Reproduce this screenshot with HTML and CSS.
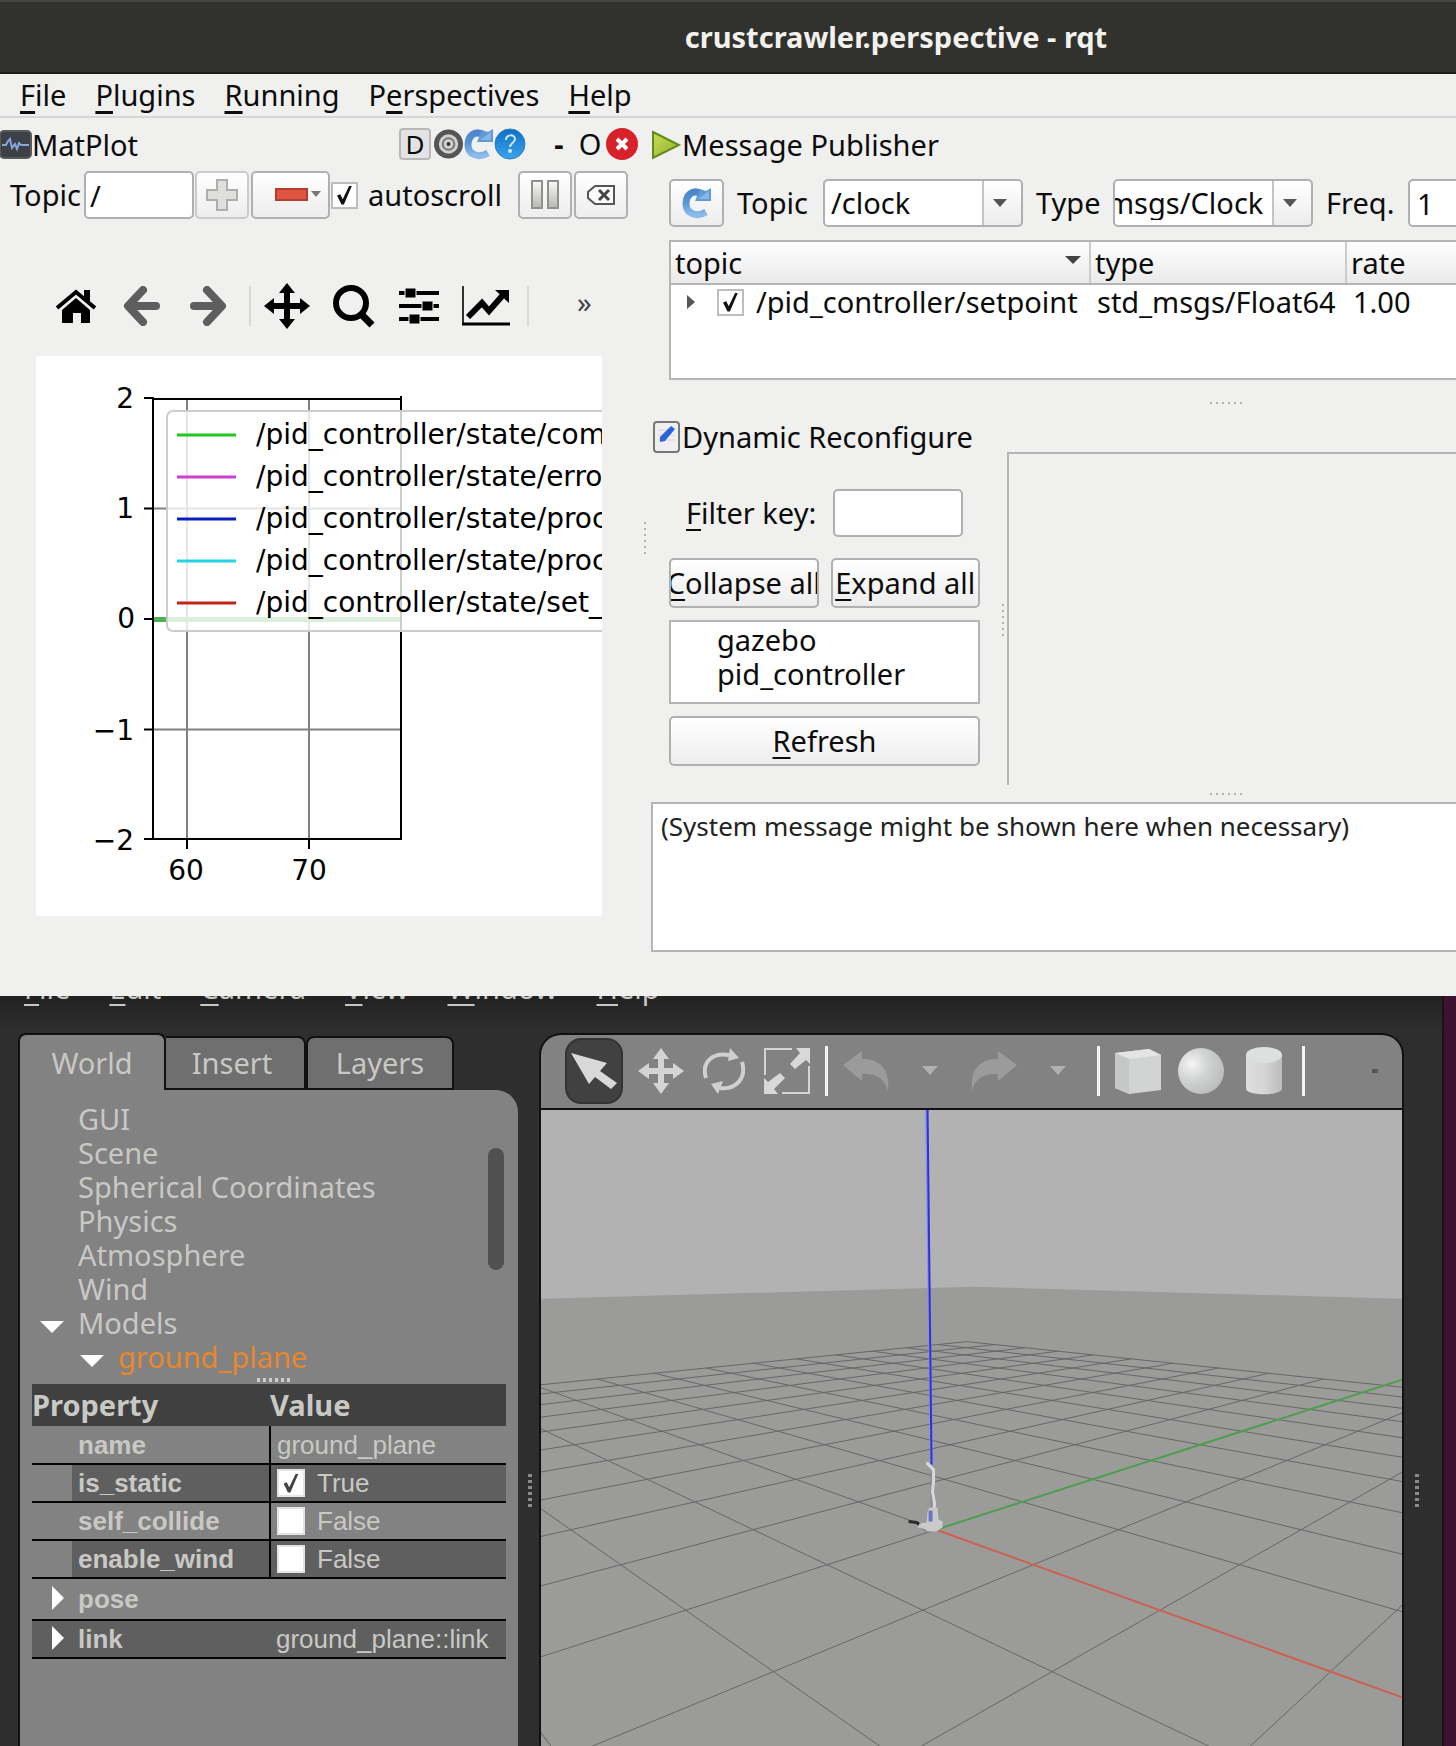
FILE: index.html
```html
<!DOCTYPE html>
<html lang="en">
<head>
<meta charset="utf-8">
<title>crustcrawler.perspective - rqt</title>
<link rel="stylesheet" href="styles.css">
</head>
<body>
<svg class="defs" width="0" height="0" aria-hidden="true">
  <defs>
    <linearGradient id="blue" x1="0" y1="0" x2="0" y2="1"><stop offset="0" stop-color="#4a86c8"/><stop offset="0.5" stop-color="#5b97d6"/><stop offset="1" stop-color="#8dbcea"/></linearGradient>
    <linearGradient id="help" x1="0" y1="0" x2="0" y2="1"><stop offset="0" stop-color="#0f6fc4"/><stop offset="1" stop-color="#3aa5ec"/></linearGradient>
    <linearGradient id="green" x1="0" y1="0" x2="1" y2="1"><stop offset="0" stop-color="#c8dc5a"/><stop offset="1" stop-color="#8fb02a"/></linearGradient>
    <linearGradient id="bar" x1="0" y1="0" x2="0" y2="1"><stop offset="0" stop-color="#fafafa"/><stop offset="1" stop-color="#b4b8ae"/></linearGradient>
    <radialGradient id="ball" cx="0.3" cy="0.35" r="0.7"><stop offset="0" stop-color="#f4f4f4"/><stop offset="0.5" stop-color="#d2d3d3"/><stop offset="1" stop-color="#bdbfbf"/></radialGradient>
    <linearGradient id="tube"><stop offset="0" stop-color="#dedede"/><stop offset="0.5" stop-color="#d4d5d5"/><stop offset="1" stop-color="#bcbcbc"/></linearGradient>
    <symbol id="reload" viewBox="0 0 30 32"><path d="M20 7C10 1 4 9 4 17c0 9 10 14 20 8" fill="none" stroke="url(#blue)" stroke-width="7"/><path d="M13 14h16V1l-5 3-6-2z" fill="#5f9bd8"/><path d="M16 12L27 4v8z" fill="#86b6e6"/></symbol>
  </defs>
</svg>

<main class="rqt">
  <header class="titlebar"><h1>crustcrawler.perspective - rqt</h1></header>
  <nav class="menubar">
    <a href="#"><u>F</u>ile</a><a href="#"><u>P</u>lugins</a><a href="#"><u>R</u>unning</a><a href="#">P<u>e</u>rspectives</a><a href="#"><u>H</u>elp</a>
  </nav>

  <div class="docks">
    <section class="matplot">
      <div class="dock-title">
        <svg width="32" height="30" viewBox="0 0 32 30"><rect x="0" y="1" width="31" height="27" rx="4" fill="#3d4147" stroke="#5a5a5a" stroke-width="2"/><path d="M2 15h4l2-4 2-2 2 9 3-4 2 5 2-6 2 2h8" fill="none" stroke="#86a6dc" stroke-width="2"/></svg>
        <h2>MatPlot</h2>
        <div class="dock-buttons">
          <button class="dbtn" aria-label="Toggle">D</button>
          <button class="plain" aria-label="Settings"><svg width="31" height="32" viewBox="0 0 32 32"><circle cx="16" cy="16" r="15" fill="#555"/><circle cx="16" cy="16" r="10" fill="#d0d0d0"/><circle cx="16" cy="16" r="6" fill="none" stroke="#777" stroke-width="2"/><circle cx="16" cy="16" r="2" fill="#333"/></svg></button>
          <button class="plain" aria-label="Reload"><svg width="30" height="32"><use href="#reload"/></svg></button>
          <button class="plain" aria-label="Help"><svg width="32" height="32" viewBox="0 0 32 32"><circle cx="16" cy="16" r="15" fill="url(#help)" stroke="#2c7cc0"/><path d="M12 12c0-6 9-6 9-1 0 4-5 4-5 8" fill="none" stroke="#cfeaff" stroke-width="2"/><circle cx="16" cy="23" r="2" fill="#cfeaff"/></svg></button>
          <button class="plain letter dash" aria-label="Minimize">-</button>
          <button class="plain letter" aria-label="Float">O</button>
          <button class="plain" aria-label="Close"><svg width="32" height="32" viewBox="0 0 32 32"><circle cx="16" cy="16" r="16" fill="#d8222a"/><path d="M11 11l10 10M21 11L11 21" stroke="#fff" stroke-width="4"/></svg></button>
        </div>
      </div>

      <div class="plot-controls">
        <label for="plot-topic">Topic</label>
        <input id="plot-topic" type="text" value="/">
        <button class="btn add" aria-label="Add topic"><svg width="32" height="32" viewBox="0 0 32 32"><path d="M11 1h10v10h10v10H21v10H11V21H1V11h10z" fill="#dfe0dd" stroke="#adafaa" stroke-width="2"/></svg></button>
        <button class="btn remove" aria-label="Remove topic"><svg width="48" height="16" viewBox="0 0 48 16"><rect x="1" y="2" width="31" height="11" fill="#e0553f" stroke="#b23f2e" stroke-width="2"/><path d="M36 4h10l-5 6z" fill="#777"/></svg></button>
        <label class="auto"><input type="checkbox" class="tick" checked>autoscroll</label>
        <button class="btn pause" aria-label="Pause"><svg width="30" height="30" viewBox="0 0 30 30"><path d="M2 1h10v27H2zM18 1h10v27H18z" fill="url(#bar)" stroke="#8f928b" stroke-width="2"/></svg></button>
        <button class="btn clear" aria-label="Clear"><svg width="30" height="22" viewBox="0 0 30 22"><path d="M9 2h19v18H9L2 14V8z" fill="#fafafa" stroke="#555" stroke-width="2"/><path d="M13 6l10 10M23 6L13 16" stroke="#444" stroke-width="3"/></svg></button>
      </div>

      <div class="nav-tools">
        <div class="nav-group history">
          <button class="plain" aria-label="Home"><svg width="40" height="36" viewBox="0 0 40 36"><path d="M20 10L34 22v13H25V25h-8v10H6V22z"/><path d="M1 20L20 4l19 16" fill="none" stroke="#000" stroke-width="4"/><path d="M28 2h6v13l-6-5z"/></svg></button>
          <button class="plain" aria-label="Back"><svg width="40" height="40" viewBox="0 0 40 40"><path d="M21 4L6 20l15 16M8 20h26" fill="none" stroke="#5e5e5e" stroke-width="8" stroke-linecap="round" stroke-linejoin="round"/></svg></button>
          <button class="plain" aria-label="Forward"><svg width="40" height="40" viewBox="0 0 40 40"><path d="M19 4l15 16-15 16M32 20H6" fill="none" stroke="#5e5e5e" stroke-width="8" stroke-linecap="round" stroke-linejoin="round"/></svg></button>
        </div>
        <i class="bar"></i>
        <div class="nav-group modes">
          <button class="plain" aria-label="Pan"><svg width="46" height="46" viewBox="0 0 46 46"><path d="M23 0l8 10h-5v10h10v-5l10 8-10 8v-5H26v10h5l-8 10-8-10h5V26H10v5L0 23l10-8v5h10V10h-5z"/></svg></button>
          <button class="plain" aria-label="Zoom"><svg width="44" height="44" viewBox="0 0 44 44"><circle cx="19" cy="19" r="15" fill="none" stroke="#000" stroke-width="6"/><path d="M29 30l11 11" stroke="#000" stroke-width="7"/></svg></button>
          <button class="plain" aria-label="Subplots"><svg width="42" height="38" viewBox="0 0 42 38"><path d="M1 6h40M1 19h40M1 32h40" stroke="#000" stroke-width="4"/><path d="M7 1h11v10H7zM24 14h11v10H24zM11 27h11v10H11z" stroke="#f0f0ef"/></svg></button>
          <button class="plain" aria-label="Edit axes"><svg width="48" height="40" viewBox="0 0 48 40"><path d="M1 0v37" stroke="#333" stroke-width="2"/><path d="M0 38h48" stroke="#000" stroke-width="3"/><path d="M6 31l14-14 7 8L41 9" fill="none" stroke="#000" stroke-width="6"/><path d="M33 4h14v13z"/></svg></button>
        </div>
        <i class="bar"></i>
        <button class="plain more" aria-label="More">»</button>
      </div>

      <svg class="figure" viewBox="0 0 566 560" role="img" aria-label="Plot">
        <rect width="566" height="560" fill="#fff"/>
        <path d="M151 43v440M273 43v440M117 152.500h248M117 373.500h248" stroke="#808080" stroke-width="2"/>
        <path d="M117 263.500h248" stroke="#4caf50" stroke-width="5"/>
        <path d="M117 41v443M365 40v444M108 42h9M117 43h248M108 483h257M108 152.500h9M108 263h9M108 373.500h9M151 483v10M273 483v10" stroke="#000" stroke-width="2" fill="none"/>
        <rect x="131" y="55" width="480" height="220" rx="6" fill="#fff" fill-opacity="0.800" stroke="#ccc" stroke-width="2"/>
        <g stroke-width="3"><path d="M141 79h59" stroke="#1fc81f"/><path d="M141 121h59" stroke="#cf3fcf"/><path d="M141 163h59" stroke="#0a1fc0"/><path d="M141 205h59" stroke="#25d5e5"/><path d="M141 247h59" stroke="#c22418"/></g>
        <g class="fig-text">
          <text x="220" y="88">/pid_controller/state/com</text>
          <text x="220" y="130">/pid_controller/state/erro</text>
          <text x="220" y="172">/pid_controller/state/proc</text>
          <text x="220" y="214">/pid_controller/state/proc</text>
          <text x="220" y="256">/pid_controller/state/set_</text>
          <g text-anchor="end"><text x="98" y="52">2</text><text x="98" y="162">1</text><text x="99" y="272">0</text><text x="98" y="384">−1</text><text x="98" y="494">−2</text></g>
          <g text-anchor="middle"><text x="150" y="524">60</text><text x="273" y="524">70</text></g>
        </g>
      </svg>
    </section>

    <div class="split-v"><i class="dots-v"></i></div>

    <section class="right">
      <div class="dock-title">
        <svg width="31" height="30" viewBox="0 0 31 30"><path d="M2 2l26 13L2 28z" fill="url(#green)" stroke="#5f8a1c" stroke-width="2"/></svg>
        <h2>Message Publisher</h2>
      </div>
      <div class="pub-controls">
        <button class="btn reload" aria-label="Reload"><svg width="30" height="32"><use href="#reload"/></svg></button>
        <label for="pub-topic">Topic</label>
        <span class="combo"><select id="pub-topic"><option>/clock</option></select></span>
        <label for="pub-type">Type</label>
        <span class="combo cut"><select id="pub-type"><option>msgs/Clock</option></select></span>
        <label for="pub-freq">Freq.</label>
        <input id="pub-freq" type="text" value="1">
      </div>
      <div class="pub-table">
        <table>
          <thead><tr><th class="c-topic">topic<i class="sort"></i></th><th class="c-type">type</th><th class="c-rate">rate</th></tr></thead>
          <tbody><tr><td><label class="pub-row"><i class="fold"></i><input type="checkbox" class="tick" checked>/pid_controller/setpoint</label></td><td>std_msgs/Float64</td><td>1.00</td></tr></tbody>
        </table>
      </div>
      <div class="split-h"><i class="dots-h"></i></div>

      <div class="reconf">
        <div class="reconf-left">
          <div class="dock-title">
            <svg width="31" height="32" viewBox="0 0 31 32"><rect x="3" y="1" width="25" height="30" rx="3" fill="#efefef" stroke="#777" stroke-width="2"/><path d="M7 9h14M7 14h17M7 19h17" stroke="#d5d5d5"/><path d="M9 16L20 5l4 3-10 12-5 1z" fill="#2a62d8"/></svg>
            <h2>Dynamic Reconfigure</h2>
          </div>
          <div class="filter"><label for="filter"><u>F</u>ilter key:</label><input id="filter" type="text"></div>
          <div class="pair"><button class="btn"><u>C</u>ollapse all</button><button class="btn"><u>E</u>xpand all</button></div>
          <ul class="nodes"><li>gazebo</li><li>pid_controller</li></ul>
          <button class="btn wide"><u>R</u>efresh</button>
        </div>
        <div class="reconf-split"><i class="dots-v"></i></div>
        <div class="reconf-view"></div>
      </div>
      <div class="split-h low"><i class="dots-h"></i></div>
      <div class="sysmsg">(System message might be shown here when necessary)</div>
    </section>
  </div>
</main>

<div class="desktop">
  <section class="gazebo">
    <nav class="gz-menu"><a href="#"><u>F</u>ile</a><a href="#"><u>E</u>dit</a><a href="#"><u>C</u>amera</a><a href="#"><u>V</u>iew</a><a href="#"><u>W</u>indow</a><a href="#"><u>H</u>elp</a></nav>
    <div class="gz-main">
      <aside class="side">
        <div class="tabs"><button class="tab on">World</button><button class="tab">Insert</button><button class="tab last">Layers</button></div>
        <div class="panel">
          <div class="tree-box">
            <ul class="tree">
              <li>GUI</li><li>Scene</li><li>Spherical Coordinates</li><li>Physics</li><li>Atmosphere</li><li>Wind</li>
              <li class="open">Models</li><li class="open sub">ground_plane</li>
            </ul>
            <i class="scroll"></i>
          </div>
          <div class="grip"><i class="dots-h"></i></div>
          <table class="props">
            <thead><tr><th class="p-name">Property</th><th>Value</th></tr></thead>
            <tbody>
              <tr><th>name</th><td>ground_plane</td></tr>
              <tr class="dark"><th>is_static</th><td><label><input type="checkbox" class="tick" checked>True</label></td></tr>
              <tr><th>self_collide</th><td><label><input type="checkbox" class="tick">False</label></td></tr>
              <tr class="dark"><th>enable_wind</th><td><label><input type="checkbox" class="tick">False</label></td></tr>
              <tr class="group tall"><th>pose</th><td></td></tr>
              <tr class="group dark"><th>link</th><td>ground_plane::link</td></tr>
            </tbody>
          </table>
        </div>
      </aside>
      <div class="gutter"><i class="dots-v"></i></div>
      <div class="view">
        <div class="tools">
          <button class="tool on" aria-label="Select"><svg width="46" height="38" viewBox="0 0 46 38"><path d="M0 1l36 10-7 8 17 12-6 6-16-12-6 7z" fill="#d8d8d8"/></svg></button>
          <button class="tool" aria-label="Translate"><svg width="46" height="46" viewBox="0 0 46 46"><path d="M23 0l8 11h-5v9h9v-5l11 8-11 8v-5h-9v9h5l-8 11-8-11h5v-9h-9v5L0 23l11-8v5h9v-9h-5z" fill="#d4d4d4"/></svg></button>
          <button class="tool" aria-label="Rotate"><svg width="42" height="46" viewBox="0 0 42 46"><path d="M3 30C-2 14 10 4 26 7M39 14c5 17-7 28-22 26" fill="none" stroke="#d0d0d0" stroke-width="4"/><path d="M27 0l9 10-11 3zM15 46L8 36l12-3z" fill="#d0d0d0"/></svg></button>
          <button class="tool" aria-label="Scale"><svg width="46" height="46" viewBox="0 0 46 46"><path d="M28 1H1v26M18 45h27V18" fill="none" stroke="#d4d4d4" stroke-width="2"/><path d="M46 0v16l-4-4-11 9-5-5 10-11-4-5zM0 46V30l4 4 12-9 5 5-11 11 4 5z" fill="#d8d8d8"/></svg></button>
          <i class="mark"></i>
          <button class="tool" aria-label="Undo"><svg width="46" height="40" viewBox="0 0 46 40"><path d="M19 0v8c20 0 28 12 26 32-4-14-12-17-26-17v7L0 14z" fill="#9b9b9b"/></svg></button>
          <button class="tool drop" aria-label="Undo history"></button>
          <button class="tool" aria-label="Redo"><svg width="46" height="40" viewBox="0 0 46 40"><path d="M27 0v8C7 8-1 20 1 40c4-14 12-17 26-17v7l19-16z" fill="#9b9b9b"/></svg></button>
          <button class="tool drop" aria-label="Redo history"></button>
          <i class="mark"></i>
          <button class="tool" aria-label="Box"><svg width="46" height="46" viewBox="0 0 46 46"><path d="M0 5L34 1l12 6v35L14 46 0 40z" fill="#d2d4d4"/><path d="M0 5L34 1l12 6-32 4z" fill="#e4e4e4"/><path d="M0 5l14 6v35L0 40z" fill="#c6c7c7"/></svg></button>
          <button class="tool" aria-label="Sphere"><svg width="46" height="46" viewBox="0 0 46 46"><circle cx="23" cy="23" r="23" fill="url(#ball)"/></svg></button>
          <button class="tool" aria-label="Cylinder"><svg width="38" height="48" viewBox="0 0 38 48"><path d="M1 8v34c2 7 34 7 36 0V8z" fill="url(#tube)"/><ellipse cx="19" cy="8" rx="18" ry="8" fill="#dedfdf"/></svg></button>
          <i class="mark"></i>
          <i class="ext"></i>
        </div>
        <svg class="scene" viewBox="0 0 862 637" preserveAspectRatio="xMidYMin slice" role="img" aria-label="3D view">
          <rect width="862" height="637" fill="#b2b2b2"/>
          <path d="M0 189L434 177 862 189V637H0z" fill="#9b9b9a"/>
          <g id="grid" stroke="#666" stroke-width="1"></g>
          <path id="axis-y" stroke="#4da04d" stroke-width="2"/>
          <path id="axis-x" stroke="#d0604f" stroke-width="2"/>
          <path d="M386 0L391 355" stroke="#8a8fea" stroke-width="3"/><path d="M387 0L391 355" stroke="#2a34dc" stroke-width="2"/>
          <path d="M368 412l8 1 10 7" stroke="#2b2b2b" stroke-width="3" fill="none"/>
          <path d="M391 362v48" stroke="#8c8c94" stroke-width="2"/>
          <path d="M386 353l7 7v12l-1 10 2 12-1 12" stroke="#d8d8dc" stroke-width="3" fill="none"/>
          <path d="M387 402l2-4h8l1 12 4 2v6l-6 4h-8l-6-3-5-1 2-4 7-1z" fill="#cacaca"/>
          <path d="M390 401v11" stroke="#6a76c8" stroke-width="4"/>
        </svg>
      </div>
      <div class="gutter end"><i class="dots-v"></i></div>
    </div>
  </section>
</div>
<script src="scene.js"></script>
</body>
</html>
```
FILE: styles.css
```css
* { box-sizing: border-box; }
html, body { height: 100%; }
body { margin: 0; display: flex; flex-direction: column; overflow: hidden; background: #2e2e2e; font: 29px/34px "Noto Sans", "Open Sans", sans-serif; color: #0c0c0c; }
h1, h2, ul { margin: 0; padding: 0; font: inherit; }
li { list-style: none; }
a { color: inherit; text-decoration: none; }
i { font-style: normal; display: block; flex: none; }
button, input, select { font: inherit; color: inherit; margin: 0; padding: 0; border-radius: 0; outline: 0; }
svg { display: block; flex: none; }
u { text-decoration: underline 2px; text-underline-offset: 5px; text-decoration-skip-ink: none; }
.defs { position: absolute; }

.rqt { flex: none; background: #f0f0ef; overflow: hidden; }
.titlebar { height: 74px; background: #31312d; border-top: 2px solid #444; border-bottom: 2px solid #1c1c1a; display: flex; align-items: center; justify-content: center; padding-left: 336px; }
.titlebar h1 { font-weight: 700; color: #f2f1ee; font-size: 29px; white-space: nowrap; }
.menubar { height: 44px; display: flex; gap: 29px; padding: 4px 20px; border-bottom: 2px solid #d6d6d6; }
.menubar u { text-decoration-thickness: 3px; }

.docks { display: flex; height: 878px; }
.matplot { width: 638px; flex: none; display: flex; flex-direction: column; }
.dock-title { display: flex; align-items: center; height: 34px; white-space: nowrap; }
.matplot .dock-title, .right > .dock-title { margin-top: 10px; }
.dock-buttons { margin-left: auto; display: flex; align-items: center; margin-top: -2px; }
.plain { background: none; border: 0; }
.dbtn { width: 32px; height: 32px; line-height: 28px; margin-right: 2px; background: #e3e3e6; border: 2px solid #b9b9b9; border-radius: 4px; font-size: 26px; }
.letter { width: 32px; }
.dash { margin-left: 18px; width: 30px; font-weight: 700; }

.plot-controls { display: flex; align-items: center; height: 48px; margin-top: 9px; padding-left: 10px; }
.plot-controls > label:first-child { width: 74px; }
input[type="text"] { height: 48px; background: #fff; border: 2px solid #b0b0b0; border-radius: 5px; }
#plot-topic { width: 110px; padding-left: 4px; margin-right: 1px; }
.btn { height: 48px; flex: none; border: 2px solid #b0b0b0; border-radius: 5px; background: linear-gradient(#fff, #ededed); display: flex; align-items: center; justify-content: center; white-space: nowrap; overflow: hidden; }
.add { width: 54px; border-color: #cbcbcb; margin-right: 2px; }
.remove { width: 79px; padding-left: 16px; }
.auto { display: flex; align-items: center; gap: 10px; margin-left: 1px; width: 187px; }
.pause { width: 54px; margin-right: 2px; }
.clear { width: 54px; }
.tick { appearance: none; flex: none; width: 27px; height: 27px; border: 2px solid #bdbdbd; background: #fff; display: grid; place-items: center; }
.tick:checked::after { content: ""; width: 15px; height: 19px; background: #111; clip-path: polygon(0 52%, 22% 46%, 38% 72%, 82% 0, 100% 0, 46% 100%, 30% 100%); }

.nav-tools { display: flex; align-items: center; height: 50px; margin-top: 62px; padding-left: 56px; }
.nav-group { display: flex; align-items: center; gap: 26px; }
.modes { gap: 22px; padding: 0 17px 0 13px; }
.history { padding-right: 21px; }
.nav-tools .bar { width: 2px; height: 40px; background: #d9d9d9; }
.more { margin: -8px 0 0 48px; color: #444; }

.figure { width: 566px; height: 560px; margin: 25px 0 0 36px; }
.fig-text { font: 28px "DejaVu Sans", sans-serif; }

.split-v { width: 13px; flex: none; display: flex; align-items: center; justify-content: center; padding-bottom: 36px; }
.dots-v { width: 2px; height: 34px; background: repeating-linear-gradient(#b2b2b2 0 2px, transparent 2px 6px); }
.dots-h { width: 34px; height: 2px; background: repeating-linear-gradient(90deg, #b2b2b2 0 2px, transparent 2px 6px); }
.right { flex: 1; min-width: 0; }
.pub-controls { display: flex; align-items: center; height: 48px; margin-top: 17px; padding-left: 18px; white-space: nowrap; overflow: hidden; }
.reload { width: 55px; margin-right: 13px; }
.pub-controls label { flex: none; }
.pub-controls label[for="pub-topic"] { width: 86px; }
.pub-controls label[for="pub-type"] { width: 77px; }
.pub-controls label[for="pub-freq"] { width: 82px; }
.combo { position: relative; flex: none; width: 200px; height: 48px; margin-right: 13px; }
.combo select { appearance: none; width: 100%; height: 48px; padding-left: 6px; border: 2px solid #b0b0b0; border-radius: 5px; background: linear-gradient(90deg, #fff 157px, #c4c4c4 157px 159px, transparent 159px), linear-gradient(#fff, #ededed); }
.combo::after { content: ""; position: absolute; right: 16px; top: 20px; border: 7px solid transparent; border-top: 8px solid #555; border-bottom: 0; }
.cut select { padding-left: 0; text-indent: -8px; }
#pub-freq { width: 90px; flex: none; padding-left: 7px; }
.pub-table { margin: 13px 0 0 18px; height: 140px; background: #fff; border: 2px solid #b5b5b5; border-right: 0; overflow: hidden; }
.pub-table table { width: 100%; border-collapse: collapse; table-layout: fixed; white-space: nowrap; }
.pub-table th { height: 42px; padding: 0 4px; text-align: left; font-weight: 400; background: linear-gradient(#fff, #eaeaea); border-bottom: 2px solid #b5b5b5; border-right: 2px solid #ccc; position: relative; }
.pub-table .c-topic { width: 419px; }
.pub-table .c-type { width: 256px; }
.pub-table .c-rate { border-right: 0; }
.sort { position: absolute; right: 8px; top: 14px; border: 8px solid transparent; border-top: 8px solid #444; border-bottom: 0; }
.pub-table td { padding: 0 7px; height: 34px; }
.pub-table td:first-child { padding: 0; }
.pub-row { display: flex; align-items: center; }
.fold { margin: 0 22px 0 16px; border: 7px solid transparent; border-left: 8px solid #555; border-right: 0; }
.pub-row .tick { margin-right: 12px; }

.split-h { height: 40px; display: flex; align-items: center; padding: 6px 0 0 559px; }
.low { height: 17px; padding-top: 0; }
.reconf { display: flex; height: 365px; }
.reconf-left { width: 329px; flex: none; display: flex; flex-direction: column; }
.filter { display: flex; align-items: center; margin: 35px 0 0 35px; }
#filter { width: 130px; margin-left: auto; margin-right: 17px; }
.pair { display: flex; gap: 12px; margin: 21px 0 0 18px; }
.reconf .btn { height: 50px; }
.pair .btn { flex: 1 1 0; min-width: 0; }
.nodes { margin: 12px 0 0 18px; height: 84px; background: #fff; border: 2px solid #b5b5b5; padding: 1px 0 0 46px; }
.wide { margin: 12px 0 0 18px; }
.reconf-split { width: 27px; flex: none; display: flex; align-items: center; justify-content: flex-end; padding: 36px 3px 0 0; }
.reconf-view { flex: 1; margin-top: 32px; border: 2px solid #b5b5b5; border-width: 2px 0 0 2px; }
.sysmsg { height: 150px; background: #fff; border: 2px solid #b5b5b5; border-right: 0; padding: 5px 8px; font-size: 26px; color: #222; white-space: nowrap; }

.desktop { flex: 1; min-height: 0; display: flex; background: #3b1230; padding-right: 12px; }
.gazebo { flex: 1; min-width: 0; display: flex; flex-direction: column; background: linear-gradient(#222, #2e2e2e 36px); color: #c8c8c4; border-right: 2px solid #1f1018; }
.gz-menu { height: 37px; overflow: hidden; display: flex; gap: 39px; padding-left: 24px; flex: none; }
.gz-menu a { margin-top: -25px; }
.gz-main { flex: 1; min-height: 0; display: flex; }
.side { width: 500px; margin-left: 18px; flex: none; display: flex; flex-direction: column; }
.tabs { display: flex; align-items: flex-end; height: 57px; flex: none; }
.tab { height: 54px; width: 140px; background: #6f6f6f; border: 2px solid #111; border-left: 0; border-radius: 0 8px 0 0; padding-right: 6px; }
.tab.on { height: 57px; width: 148px; background: #828282; border: 2px solid #111; border-bottom: 0; border-radius: 8px 8px 0 0; padding: 0 6px; }
.tab.last { width: 148px; border-left: 2px solid #111; border-radius: 8px 8px 0 0; padding: 0; }
.panel { flex: 1; background: #828282; border-left: 2px solid #111; border-radius: 0 22px 0 0; padding: 12px 12px 0 12px; }
.tree-box { display: flex; justify-content: space-between; height: 276px; }
.tree li { display: flex; align-items: center; height: 34px; padding-left: 46px; }
.tree .open { padding-left: 8px; gap: 14px; }
.open::before { content: ""; margin-top: 7px; border: 12px solid transparent; border-top: 12px solid #fff; border-bottom: 0; }
.tree .sub { padding-left: 48px; color: #e8862c; }
.scroll { width: 16px; height: 122px; margin: 46px 2px 0 0; border-radius: 8px; background: #505050; }
.grip { height: 6px; display: flex; padding-left: 225px; }
.grip .dots-h { height: 4px; background: repeating-linear-gradient(90deg, #ccc 0 3px, transparent 3px 6px); }
.props { width: 474px; border-collapse: collapse; table-layout: fixed; font: 26px/30px "Liberation Sans", Arial, sans-serif; }
.props thead th { height: 42px; padding: 0; text-align: left; background: #404040; font: 700 29px/34px "Noto Sans", sans-serif; }
.props thead .p-name { width: 238px; }
.props tbody th, .props tbody td { height: 38px; padding: 0 6px; text-align: left; border-bottom: 2px solid #050505; white-space: nowrap; }
.props tbody th { padding-left: 46px; border-right: 2px solid #050505; }
.props .dark th { background: linear-gradient(90deg, #828282 40px, #5f5f5f 40px); }
.props .dark td, .props .group.dark th { background: #5f5f5f; }
.props .tall th, .props .tall td { height: 42px; }
.props .group th { border-right: 0; padding-left: 20px; }
.props .group th::before { content: ""; display: inline-block; margin-right: 14px; border: 12px solid transparent; border-left: 12px solid #fff; border-right: 0; vertical-align: -2px; }
.props label { display: flex; align-items: center; gap: 12px; }
.props .tick { border-color: #e4e4e4; width: 28px; height: 28px; }
.props .tick:checked::after { background: #444; }
.gutter { width: 21px; flex: none; display: flex; align-items: center; justify-content: flex-end; padding: 202px 7px 0 0; }
.gutter .dots-v { width: 4px; background: repeating-linear-gradient(#8a8a8a 0 3px, transparent 3px 6px); }
.gutter.end { width: 38px; padding-right: 23px; }
.view { flex: 1; min-width: 0; display: flex; flex-direction: column; border: 2px solid #111; border-bottom: 0; border-radius: 22px 22px 0 0; overflow: hidden; background: #828282; }
.tools { height: 75px; flex: none; display: flex; align-items: center; padding: 0 24px 2px 24px; gap: 13px; border-bottom: 2px solid #111; }
.tool { background: none; border: 0; display: grid; place-items: center; min-width: 50px; }
.tool.on { width: 58px; height: 66px; background: #414141; border: 2px solid #333; border-radius: 16px; }
.mark { width: 3px; height: 50px; background: #f4f4f4; }
.drop { min-width: 52px; }
.drop::after { content: ""; border: 8px solid transparent; border-top: 9px solid #b0b0b0; border-bottom: 0; }
.ext { width: 6px; height: 4px; background: #555; margin-left: auto; }
.scene { width: 100%; flex: 1; min-height: 0; }
```
FILE: scene.js
```js
// Ground grid of 20 x 20 one-metre cells, projected from the camera pose.
const DEPTH = 8.706;
const project = (x, y) => {
  const w = DEPTH - (x - y);
  const u = 761 + (1347 * (x + y) - 650) / w;
  const v = 348 + 5894 / w;
  return [u / 1.693 - 10, v / 2.505 + 11];
};
const segment = (a, b) => {
  const [x1, y1] = project(...a);
  const [x2, y2] = project(...b);
  return `M${x1.toFixed(1)} ${y1.toFixed(1)}L${x2.toFixed(1)} ${y2.toFixed(1)}`;
};
const NEAR = 7.5; // keep line ends in front of the camera
let d = "";
for (let i = -10; i <= 10; i++) {
  d += segment([i, 10], [i, Math.max(-10, i - NEAR)]);
  d += segment([-10, i], [Math.min(10, i + NEAR), i]);
}
const grid = document.createElementNS("http://www.w3.org/2000/svg", "path");
grid.setAttribute("d", d);
document.getElementById("grid").append(grid);
document.getElementById("axis-x").setAttribute("d", segment([0, 0], [6, 0]));
document.getElementById("axis-y").setAttribute("d", segment([0, 0], [0, 12]));
```
